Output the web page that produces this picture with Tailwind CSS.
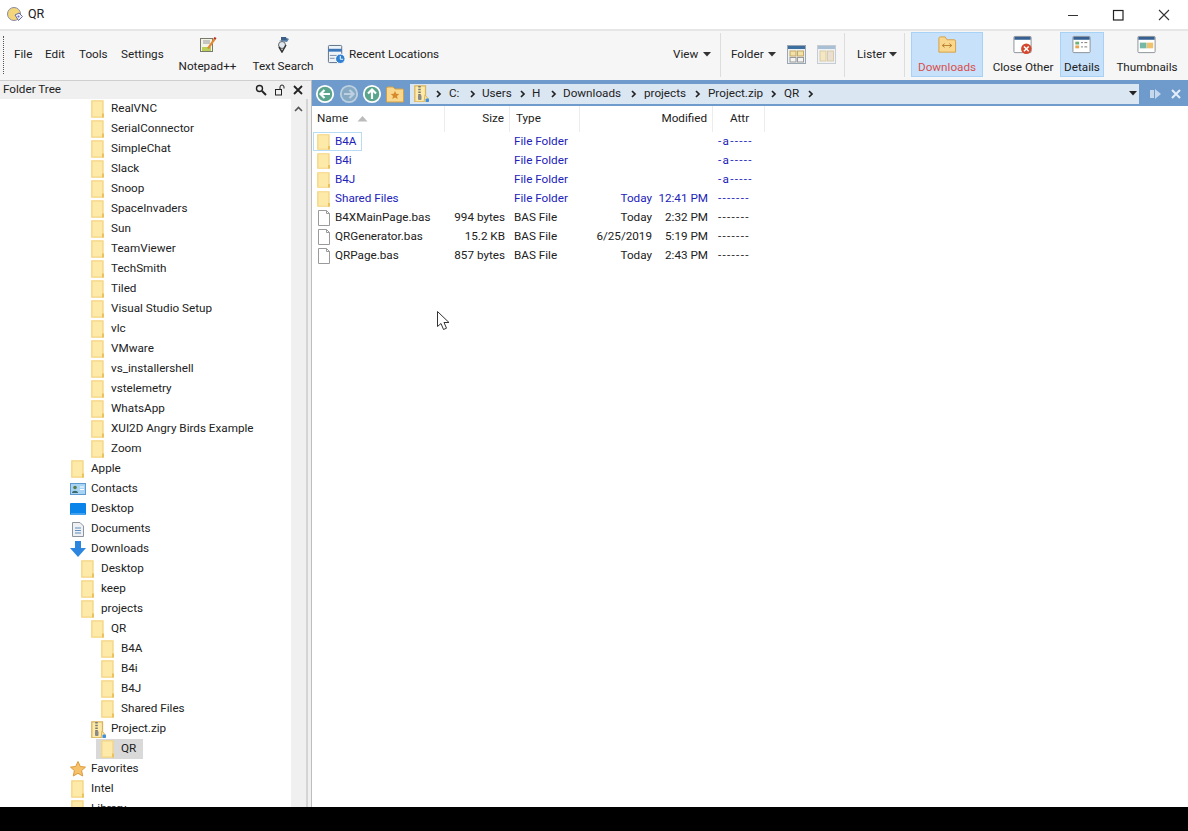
<!DOCTYPE html>
<html><head><meta charset="utf-8"><title>QR</title>
<script src="https://cdn.jsdelivr.net/npm/@tailwindcss/browser@4"></script></head>
<body class="m-0 bg-black">
<svg width="0" height="0" class="absolute">
<defs>
<symbol id="f" viewBox="0 0 14 18" preserveAspectRatio="none"><path d="M.8.8H12V17.2H.8Z" fill="#fde9a8" stroke="#f5d582" stroke-width="1.300"/><path d="M11 13.500H13V17.500H11Z" fill="#ecc25c"/></symbol>
<symbol id="doc" viewBox="0 0 14 16"><path d="M1.500.5H9.500L12.500 3.500V15.500H1.500Z" fill="#fff" stroke="#9a9a9a"/><path d="M9.500.5V3.500H12.500" fill="none" stroke="#9a9a9a"/></symbol>
<symbol id="zip" viewBox="0 0 15 17"><path d="M.8.8H11.500V17H.8Z" fill="#fdeaa8" stroke="#d9b45f" stroke-width="1.300"/><path d="M5.500 1V11" stroke="#777" stroke-width="2.500" stroke-dasharray="1.500 1.200"/><rect x="4" y="10" width="3.500" height="5" rx="1" fill="#8a8a8a"/><path d="M11 10l3 3.500V17H10Z" fill="#fdeaa8" stroke="#d9b45f"/><rect x="11.500" y="13.500" width="3.500" height="3.500" rx="1" fill="#3f8fdc"/></symbol>
<symbol id="circ" viewBox="0 0 20 20"><circle cx="10" cy="10" r="8.200" fill="#5aa58c" stroke="#fff" stroke-width="1.800"/></symbol>
<symbol id="cv" viewBox="0 0 6 8"><path d="M1 1l3 3-3 3" fill="none" stroke="#222" stroke-width="1.700"/></symbol>
</defs>
</svg>
<div class="relative w-[1188px] h-[831px] overflow-hidden bg-white text-[11.7px] leading-none text-[#222] [font-family:Roboto,sans-serif]">
  <!-- title -->
  <div class="h-[29px] flex items-center bg-white">
    <svg class="ml-[6px]" width="18" height="18" viewBox="0 0 18 18"><circle cx="8" cy="8" r="6.500" fill="#f3d67a" stroke="#8a8aa0"/><path d="M9 9l4-2 3.500 3.500-4 4z" fill="#eef" stroke="#6a6a9a"/><circle cx="12.500" cy="10.500" r="1" fill="#6a6ab0"/></svg>
    <span class="ml-[4px] text-[12.5px]">QR</span>
    <div class="ml-auto flex items-center">
      <svg width="46" height="28" viewBox="0 0 46 28"><path d="M18 14.500H28" stroke="#333"/></svg>
      <svg width="46" height="28" viewBox="0 0 46 28"><rect x="17.500" y="9.500" width="9.500" height="9.500" fill="none" stroke="#222" stroke-width="1.200"/></svg>
      <svg width="46" height="28" viewBox="0 0 46 28"><path d="M17 9l10 10M27 9L17 19" stroke="#333" stroke-width="1.100"/></svg>
    </div>
  </div>
  <!-- toolbar -->
  <div class="h-[51px] flex items-center bg-[#f6f6f6] border-t-2 border-[#e6e6e6] pb-[2px]">
    <div class="ml-[3px] w-px h-[38px] border-l border-dotted border-[#555]"></div>
    <span class="ml-[10px] w-[31px]">File</span>
    <span class="w-[34px]">Edit</span>
    <span class="w-[42px]">Tools</span>
    <span class="w-[56px]">Settings</span>
    <div class="w-[61px] flex flex-col items-center gap-[8px]">
      <svg width="18" height="17" viewBox="0 0 18 17"><rect x="1.500" y="2.500" width="12" height="13" fill="#f3f3e8" stroke="#7a7a6a"/><path d="M3 11h9v4H3z" fill="#b8cf5a"/><path d="M4 5h7M4 7h7" stroke="#999"/><path d="M8 12l7-10 2 1-7 10z" fill="#e28a30"/><path d="M14.500 2.500l1-1.500 2 1-1 1.500z" fill="#b02a2a"/></svg>
      <span class="whitespace-nowrap">Notepad++</span>
    </div>
    <div class="ml-[15px] w-[60px] flex flex-col items-center gap-[8px]">
      <svg width="14" height="17" viewBox="0 0 14 17"><path d="M3 5l8-3 2 1-2 3z" fill="#5a7fa8"/><path d="M5 1h5l1 3H5z" fill="#3e5f85"/><circle cx="6" cy="9" r="3.500" fill="#dfe7ef" stroke="#666"/><path d="M3 11l3 5 4-7" fill="none" stroke="#333" stroke-width="1.500"/></svg>
      <span class="whitespace-nowrap">Text Search</span>
    </div>
    <svg class="ml-[14px]" width="19" height="21" viewBox="0 0 20 22"><rect x="1.500" y="1.500" width="14" height="18" rx="1" fill="#eef3f8" stroke="#5d6f87"/><path d="M1.500 5h14v3h-14z" fill="#3a76b8"/><path d="M3 12h8M3 15h5" stroke="#7a8aa0"/><circle cx="14" cy="15.500" r="5" fill="#2f80d0" stroke="#fff"/><path d="M14 12.500V16h3" fill="none" stroke="#fff"/></svg>
    <span class="ml-[3px] whitespace-nowrap">Recent Locations</span>
    <div class="ml-auto w-[39px] flex items-center justify-between"><span>View</span><svg width="9" height="5"><path d="M0 0h8L4 4.500z" fill="#333"/></svg></div>
    <div class="ml-[8px] h-[44px] w-px bg-[#dddddd]"></div>
    <div class="ml-[10px] w-[46px] flex items-center justify-between"><span>Folder</span><svg width="9" height="5"><path d="M0 0h8L4 4.500z" fill="#333"/></svg></div>
    <svg class="ml-[10px]" width="20" height="20" viewBox="0 0 20 20"><rect x=".5" y=".5" width="18" height="18" fill="#eef1f4" stroke="#9aa6b2"/><rect x="1" y="1" width="17" height="3" fill="#3c6f9f"/><rect x="3" y="6" width="6" height="5" fill="#f2e2a8" stroke="#c2a866"/><rect x="10.500" y="6" width="6" height="5" fill="#f2e2a8" stroke="#c2a866"/><rect x="3" y="12.500" width="6" height="4.500" fill="#f4f4f4" stroke="#999"/><rect x="10.500" y="12.500" width="6" height="4.500" fill="#f4f4f4" stroke="#999"/></svg>
    <svg class="ml-[10px]" width="20" height="20" viewBox="0 0 20 20"><rect x=".5" y=".5" width="18" height="18" fill="#f0f2f5" stroke="#c6ccd4"/><rect x="1" y="1" width="17" height="3" fill="#a9bfd4"/><rect x="3" y="6" width="6" height="10" fill="#f4e7c2" stroke="#d8cba8"/><rect x="10.500" y="6" width="6" height="10" fill="#eadfd0" stroke="#d8cba8"/></svg>
    <div class="ml-[7px] h-[44px] w-px bg-[#dddddd]"></div>
    <div class="ml-[12px] w-[41px] flex items-center justify-between"><span>Lister</span><svg width="9" height="5"><path d="M0 0h8L4 4.500z" fill="#333"/></svg></div>
    <div class="ml-[6px] h-[44px] w-px bg-[#dddddd]"></div>
    <div class="ml-[6px] w-[72px] h-[45px] bg-[#c8e1fa] border border-[#a8d2f5] flex flex-col items-center pt-[2px] gap-[7px] text-[#d8504d]">
      <svg width="20" height="20" viewBox="0 0 20 21"><path d="M1.500 3.500A1.500 1.500 0 013 2H8l2 3h7.500A1.500 1.500 0 0119 6.500V18H1.500Z" fill="#f9d88d" stroke="#d39f45"/><path d="M5 11h10M5 11l2.500-2M5 11l2.500 2M15 11l-2.500-2M15 11l-2.500 2" stroke="#b8802f" fill="none"/></svg>
      <span class="whitespace-nowrap">Downloads</span>
    </div>
    <div class="ml-[8px] w-[64px] h-[45px] flex flex-col items-center pt-[3px] gap-[7px]">
      <svg width="20" height="20" viewBox="0 0 20 21"><rect x=".5" y="1.500" width="18" height="17" rx="1" fill="#fff" stroke="#8a8f96"/><rect x="1" y="2" width="17" height="3" fill="#365f92"/><circle cx="13.500" cy="14.500" r="5.500" fill="#d2492f"/><path d="M11 12l5 5M16 12l-5 5" stroke="#fff" stroke-width="1.600"/></svg>
      <span class="whitespace-nowrap">Close Other</span>
    </div>
    <div class="ml-[5px] w-[44px] h-[45px] bg-[#c8e1fa] border border-[#a8d2f5] flex flex-col items-center pt-[2px] gap-[7px]">
      <svg width="20" height="20" viewBox="0 0 20 21"><rect x=".5" y="1.500" width="18" height="17" rx="1" fill="#fff" stroke="#8a8f96"/><rect x="1" y="2" width="17" height="3" fill="#365f92"/><rect x="3" y="7" width="4" height="3" fill="#6fb27a"/><rect x="3" y="11" width="4" height="3" fill="#e6a64f"/><path d="M9 8h2M12.500 8h3M9 12.500h2M12.500 12.500h3" stroke="#777"/></svg>
      <span>Details</span>
    </div>
    <div class="ml-[11px] mr-[9px] w-[64px] h-[45px] flex flex-col items-center pt-[3px] gap-[7px]">
      <svg width="20" height="20" viewBox="0 0 20 21"><rect x=".5" y="1.500" width="18" height="17" rx="1" fill="#fff" stroke="#8a8f96"/><rect x="1" y="2" width="17" height="3" fill="#365f92"/><rect x="2.500" y="8" width="7" height="6" fill="#77b7a5"/><rect x="10" y="8" width="6.500" height="6" fill="#f1c26d"/></svg>
      <span>Thumbnails</span>
    </div>
  </div>
  <div class="h-[727px] flex">
    <!-- left -->
    <div class="w-[311px] h-full flex flex-col shrink-0">
      <div class="h-[19px] flex items-center bg-[#f0f0f0] border-t border-[#cfcfcf] pl-[3px]">
        <span>Folder Tree</span>
        <svg class="ml-auto" width="12" height="12" viewBox="0 0 12 12"><circle cx="4.500" cy="4.500" r="3" fill="none" stroke="#222" stroke-width="1.400"/><path d="M7 7l4 4" stroke="#222" stroke-width="2"/></svg>
        <svg class="ml-[7px]" width="12" height="12" viewBox="0 0 12 12"><rect x="1.500" y="5.500" width="6" height="5.500" fill="none" stroke="#222"/><path d="M6 5.500V3a2 2 0 014 0v1.500" fill="none" stroke="#222"/></svg>
        <svg class="ml-[7px] mr-[8px]" width="10" height="10" viewBox="0 0 10 10"><path d="M1 1l8 8M9 1L1 9" stroke="#222" stroke-width="1.800"/></svg>
      </div>
      <div class="flex-1 flex min-h-0">
        <div class="w-[291px] overflow-hidden bg-white">
          <div class="h-5 pl-[91px] flex items-center"><svg class="w-[14px] h-[18px] mr-[6px]"><use href="#f"/></svg>RealVNC</div>
          <div class="h-5 pl-[91px] flex items-center"><svg class="w-[14px] h-[18px] mr-[6px]"><use href="#f"/></svg>SerialConnector</div>
          <div class="h-5 pl-[91px] flex items-center"><svg class="w-[14px] h-[18px] mr-[6px]"><use href="#f"/></svg>SimpleChat</div>
          <div class="h-5 pl-[91px] flex items-center"><svg class="w-[14px] h-[18px] mr-[6px]"><use href="#f"/></svg>Slack</div>
          <div class="h-5 pl-[91px] flex items-center"><svg class="w-[14px] h-[18px] mr-[6px]"><use href="#f"/></svg>Snoop</div>
          <div class="h-5 pl-[91px] flex items-center"><svg class="w-[14px] h-[18px] mr-[6px]"><use href="#f"/></svg>SpaceInvaders</div>
          <div class="h-5 pl-[91px] flex items-center"><svg class="w-[14px] h-[18px] mr-[6px]"><use href="#f"/></svg>Sun</div>
          <div class="h-5 pl-[91px] flex items-center"><svg class="w-[14px] h-[18px] mr-[6px]"><use href="#f"/></svg>TeamViewer</div>
          <div class="h-5 pl-[91px] flex items-center"><svg class="w-[14px] h-[18px] mr-[6px]"><use href="#f"/></svg>TechSmith</div>
          <div class="h-5 pl-[91px] flex items-center"><svg class="w-[14px] h-[18px] mr-[6px]"><use href="#f"/></svg>Tiled</div>
          <div class="h-5 pl-[91px] flex items-center"><svg class="w-[14px] h-[18px] mr-[6px]"><use href="#f"/></svg>Visual Studio Setup</div>
          <div class="h-5 pl-[91px] flex items-center"><svg class="w-[14px] h-[18px] mr-[6px]"><use href="#f"/></svg>vlc</div>
          <div class="h-5 pl-[91px] flex items-center"><svg class="w-[14px] h-[18px] mr-[6px]"><use href="#f"/></svg>VMware</div>
          <div class="h-5 pl-[91px] flex items-center"><svg class="w-[14px] h-[18px] mr-[6px]"><use href="#f"/></svg>vs_installershell</div>
          <div class="h-5 pl-[91px] flex items-center"><svg class="w-[14px] h-[18px] mr-[6px]"><use href="#f"/></svg>vstelemetry</div>
          <div class="h-5 pl-[91px] flex items-center"><svg class="w-[14px] h-[18px] mr-[6px]"><use href="#f"/></svg>WhatsApp</div>
          <div class="h-5 pl-[91px] flex items-center"><svg class="w-[14px] h-[18px] mr-[6px]"><use href="#f"/></svg>XUI2D Angry Birds Example</div>
          <div class="h-5 pl-[91px] flex items-center"><svg class="w-[14px] h-[18px] mr-[6px]"><use href="#f"/></svg>Zoom</div>
          <div class="h-5 pl-[71px] flex items-center"><svg class="w-[14px] h-[18px] mr-[6px]"><use href="#f"/></svg>Apple</div>
          <div class="h-5 pl-[70px] flex items-center"><svg class="mr-[5px]" width="16" height="12" viewBox="0 0 16 12"><rect x=".5" y=".5" width="15" height="11" fill="#a9d3f2" stroke="#5c9ad0"/><circle cx="5" cy="4.500" r="1.800" fill="#5a7a4a"/><path d="M2 10c0-3 6-3 6 0z" fill="#3a6a6a"/><path d="M10 4h4M10 6.500h4" stroke="#fff"/></svg>Contacts</div>
          <div class="h-5 pl-[70px] flex items-center"><svg class="mr-[5px]" width="16" height="13" viewBox="0 0 16 13"><rect width="16" height="12" rx="1" fill="#0a84e8"/><path d="M1 11h14" stroke="#7cc0f5"/></svg>Desktop</div>
          <div class="h-5 pl-[72px] flex items-center"><svg class="w-[12px] h-[15px] mr-[7px]" viewBox="0 0 12 15"><path d="M.5.500H8L11.500 4V14.500H.5Z" fill="#eef0f3" stroke="#8d949c"/><path d="M3 6h6M3 8.500h6M3 11h6" stroke="#5d8fc0"/></svg>Documents</div>
          <div class="h-5 pl-[70px] flex items-center"><svg class="mr-[5px]" width="16" height="16" viewBox="0 0 16 16"><path d="M5 0h6v7h5l-8 9-8-9h5z" fill="#2c86e0"/></svg>Downloads</div>
          <div class="h-5 pl-[81px] flex items-center"><svg class="w-[14px] h-[18px] mr-[6px]"><use href="#f"/></svg>Desktop</div>
          <div class="h-5 pl-[81px] flex items-center"><svg class="w-[14px] h-[18px] mr-[6px]"><use href="#f"/></svg>keep</div>
          <div class="h-5 pl-[81px] flex items-center"><svg class="w-[14px] h-[18px] mr-[6px]"><use href="#f"/></svg>projects</div>
          <div class="h-5 pl-[91px] flex items-center"><svg class="w-[14px] h-[18px] mr-[6px]"><use href="#f"/></svg>QR</div>
          <div class="h-5 pl-[101px] flex items-center"><svg class="w-[14px] h-[18px] mr-[6px]"><use href="#f"/></svg>B4A</div>
          <div class="h-5 pl-[101px] flex items-center"><svg class="w-[14px] h-[18px] mr-[6px]"><use href="#f"/></svg>B4i</div>
          <div class="h-5 pl-[101px] flex items-center"><svg class="w-[14px] h-[18px] mr-[6px]"><use href="#f"/></svg>B4J</div>
          <div class="h-5 pl-[101px] flex items-center"><svg class="w-[14px] h-[18px] mr-[6px]"><use href="#f"/></svg>Shared Files</div>
          <div class="h-5 pl-[91px] flex items-center"><svg class="w-[15px] h-[17px] mr-[5px]"><use href="#zip"/></svg>Project.zip</div>
          <div class="h-5 pl-[96px] flex items-center"><div class="h-5 w-[47px] bg-[#d9d9d9] flex items-center pl-[5px]"><svg class="w-[14px] h-[18px] mr-[6px] shrink-0"><use href="#f"/></svg>QR</div></div>
          <div class="h-5 pl-[70px] flex items-center"><svg class="mr-[5px]" width="16" height="16" viewBox="0 0 16 16"><path d="M8 .5l2.300 5 5.200.6-3.900 3.500 1.100 5.400L8 12.300 3.300 15l1.100-5.400L.5 6.100l5.200-.6z" fill="#f5c26b" stroke="#dc9a3a"/></svg>Favorites</div>
          <div class="h-5 pl-[71px] flex items-center"><svg class="w-[14px] h-[18px] mr-[6px]"><use href="#f"/></svg>Intel</div>
          <div class="h-5 pl-[71px] flex items-center"><svg class="w-[14px] h-[18px] mr-[6px]"><use href="#f"/></svg>Library</div>
        </div>
        <div class="w-[15px] bg-[#f0f0f0] flex justify-center pt-[7px]"><svg width="9" height="6" viewBox="0 0 9 6"><path d="M1 5l3.500-3.500L8 5" fill="none" stroke="#555" stroke-width="1.600"/></svg></div>
        <div class="w-[5px] bg-[#f0f0f0] border-l-2 border-[#d4d4d4]"></div>
      </div>
    </div>
    <!-- right -->
    <div class="flex-1 min-w-0 border-l border-[#bdbdbd]">
      <div class="h-[26px] bg-[#6e9bcb] flex items-center pl-[3px] pt-px">
        <svg width="20" height="20"><use href="#circ"/><path d="M15 10H6M9.500 6L5.500 10l4 4" fill="none" stroke="#fff" stroke-width="2.200"/></svg>
        <svg class="ml-[4px]" width="20" height="20"><circle cx="10" cy="10" r="8.200" fill="#86a9c4" stroke="#bcd0e2" stroke-width="1.800"/><path d="M5 10h9M10.500 6l4 4-4 4" fill="none" stroke="#bcd0e2" stroke-width="2.200"/></svg>
        <svg class="ml-[3px]" width="20" height="20"><use href="#circ"/><path d="M10 15V6M6 9.500L10 5.500l4 4" fill="none" stroke="#fff" stroke-width="2.200"/></svg>
        <svg class="ml-[4px]" width="18" height="20" viewBox="0 0 18 20"><path d="M.5 4.500A1.500 1.500 0 012 3H7l2 2h7.500A1 1 0 0117.500 6V18H.5Z" fill="#f9d88d" stroke="#d39f45"/><path d="M9 7l1.300 2.700 3 .3-2.300 2 .7 3L9 13.500 6.300 15l.7-3-2.300-2 3-.3z" fill="#d68a2c"/></svg>
        <div class="ml-[6px] mr-[11px] flex-1 h-[20px] bg-[#dbe6f3] flex items-center pl-[4px] text-[#222]">
          <svg width="15" height="17"><use href="#zip"/></svg>
          <svg class="ml-[7px] mr-[7px]" width="6" height="8"><use href="#cv"/></svg><span class="w-[21px]">C:</span>
          <svg class="mr-[6px]" width="6" height="8"><use href="#cv"/></svg><span class="w-[38px]">Users</span>
          <svg class="mr-[6px]" width="6" height="8"><use href="#cv"/></svg><span class="w-[19px]">H</span>
          <svg class="mr-[6px]" width="6" height="8"><use href="#cv"/></svg><span class="w-[68px]">Downloads</span>
          <svg class="mr-[7px]" width="6" height="8"><use href="#cv"/></svg><span class="w-[51px]">projects</span>
          <svg class="mr-[7px]" width="6" height="8"><use href="#cv"/></svg><span class="w-[63px]">Project.zip</span>
          <svg class="mr-[7px]" width="6" height="8"><use href="#cv"/></svg><span class="w-[24px]">QR</span>
          <svg width="6" height="8"><use href="#cv"/></svg>
          <svg class="ml-auto mr-[1px]" width="9" height="5"><path d="M0 0h8L4 4.500z" fill="#222"/></svg>
        </div>
        <svg width="12" height="10" viewBox="0 0 12 10"><rect y="1" width="4" height="8" fill="#c5d8ec"/><path d="M5 0l6 5-6 5z" fill="#c5d8ec"/></svg>
        <svg class="ml-[9px] mr-[7px]" width="10" height="10" viewBox="0 0 10 10"><path d="M1 1l8 8M9 1L1 9" stroke="#e4eef8" stroke-width="2"/></svg>
      </div>
      <div class="grid grid-cols-[133px_65px_70px_133px_52px] h-[26px] items-stretch w-[453px]">
        <div class="border-r border-[#ececec] flex items-center pl-[5px]">Name<svg class="ml-[9px]" width="11" height="6"><path d="M5.500 0l5 5.500H.5z" fill="#bbb"/></svg></div>
        <div class="border-r border-[#ececec] flex items-center justify-end pr-[5px]">Size</div>
        <div class="border-r border-[#ececec] flex items-center pl-[6px]">Type</div>
        <div class="border-r border-[#ececec] flex items-center justify-end pr-[5px]">Modified</div>
        <div class="border-r border-[#ececec] flex items-center pl-[17px]">Attr</div>
      </div>
      <div class="relative grid grid-cols-[133px_65px_70px_133px_52px] w-[453px] auto-rows-[19px] items-center text-[#2222bb]">
        <div class="absolute left-[1px] top-0 w-[49px] h-[19px] border border-[#b9dcf5]"></div>
        <div class="flex items-center pl-[6px]"><svg class="w-[14px] h-[16px] mr-[4px] -ml-px shrink-0"><use href="#f"/></svg>B4A</div><div></div><div class="pl-[4px]">File Folder</div><div></div><div class="pl-[5px] tracking-[1.300px]">-a-----</div>
        <div class="flex items-center pl-[6px]"><svg class="w-[14px] h-[16px] mr-[4px] -ml-px shrink-0"><use href="#f"/></svg>B4i</div><div></div><div class="pl-[4px]">File Folder</div><div></div><div class="pl-[5px] tracking-[1.300px]">-a-----</div>
        <div class="flex items-center pl-[6px]"><svg class="w-[14px] h-[16px] mr-[4px] -ml-px shrink-0"><use href="#f"/></svg>B4J</div><div></div><div class="pl-[4px]">File Folder</div><div></div><div class="pl-[5px] tracking-[1.300px]">-a-----</div>
        <div class="flex items-center pl-[6px]"><svg class="w-[14px] h-[16px] mr-[4px] -ml-px shrink-0"><use href="#f"/></svg>Shared Files</div><div></div><div class="pl-[4px]">File Folder</div><div class="flex justify-end pr-[5px]"><span>Today</span><span class="w-[56px] text-right">12:41 PM</span></div><div class="pl-[5px] tracking-[1.300px]">-------</div>
        <div class="flex items-center pl-[6px] text-[#222]"><svg class="w-[14px] h-[16px] mr-[4px] -ml-px shrink-0"><use href="#doc"/></svg>B4XMainPage.bas</div><div class="text-right pr-[5px] text-[#222]">994 bytes</div><div class="pl-[4px] text-[#222]">BAS File</div><div class="flex justify-end pr-[5px] text-[#222]"><span>Today</span><span class="w-[56px] text-right">2:32 PM</span></div><div class="pl-[5px] tracking-[1.300px] text-[#222]">-------</div>
        <div class="flex items-center pl-[6px] text-[#222]"><svg class="w-[14px] h-[16px] mr-[4px] -ml-px shrink-0"><use href="#doc"/></svg>QRGenerator.bas</div><div class="text-right pr-[5px] text-[#222]">15.2 KB</div><div class="pl-[4px] text-[#222]">BAS File</div><div class="flex justify-end pr-[5px] text-[#222]"><span>6/25/2019</span><span class="w-[56px] text-right">5:19 PM</span></div><div class="pl-[5px] tracking-[1.300px] text-[#222]">-------</div>
        <div class="flex items-center pl-[6px] text-[#222]"><svg class="w-[14px] h-[16px] mr-[4px] -ml-px shrink-0"><use href="#doc"/></svg>QRPage.bas</div><div class="text-right pr-[5px] text-[#222]">857 bytes</div><div class="pl-[4px] text-[#222]">BAS File</div><div class="flex justify-end pr-[5px] text-[#222]"><span>Today</span><span class="w-[56px] text-right">2:43 PM</span></div><div class="pl-[5px] tracking-[1.300px] text-[#222]">-------</div>
      </div>
    </div>
  </div>
  <div class="absolute left-0 right-0 top-[807px] h-[24px] bg-black"></div>
  <svg class="absolute left-[437px] top-[311px]" width="14" height="20" viewBox="0 0 14 20"><path d="M.5.500V15.500L4 12.500l2.500 6 3-1.300-2.500-5.700h5Z" fill="#fff" stroke="#333"/></svg>
</div>
</body></html>
